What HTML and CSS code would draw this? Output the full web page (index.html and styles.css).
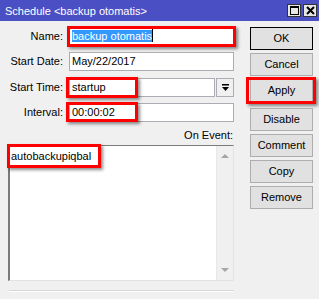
FILE: index.html
```
<!DOCTYPE html>
<html>
	<head>
		<link rel="stylesheet" href="styles.css">
	</head>
	<body>
		<div class="titlebar">
			<div class="title">Schedule &lt;backup otomatis&gt;</div>
			<div class="tb-btn">
				<svg width="9" height="9" viewBox="0 0 9 9"><rect x="0.5" y="0.5" width="8" height="8" fill="none" stroke="#000"/><rect x="0" y="0" width="9" height="2" fill="#000"/></svg>
			</div>
			<div class="tb-btn">
				<svg width="9" height="9" viewBox="0 0 9 9"><path d="M1 1 L8 8 M8 1 L1 8" stroke="#000" stroke-width="2"/></svg>
			</div>
		</div>

		<div class="content">
			<div class="form">
				<div class="row">
					<div class="label">Name:</div>
					<div class="field"><span class="selected">backup otomatis</span><span class="caret"></span><div class="mark mark-name"></div></div>
				</div>
				<div class="row">
					<div class="label">Start Date:</div>
					<div class="field">May/22/2017</div>
				</div>
				<div class="row row-time">
					<div class="label">Start Time:</div>
					<div class="field field-short">startup<div class="mark mark-short"></div></div>
					<div class="drop">
						<svg width="9" height="9" viewBox="0 0 9 9"><rect x="1" y="1" width="7" height="1.5" fill="#000"/><path d="M1 4 L8 4 L4.5 8 Z" fill="#000"/></svg>
					</div>
				</div>
				<div class="row">
					<div class="label">Interval:</div>
					<div class="field">00:00:02<div class="mark mark-short mark-interval"></div></div>
				</div>

				<div class="event-label">On Event:</div>
				<div class="event-box">
					<div class="event-text">autobackupiqbal</div>
					<div class="scrollbar">
						<span class="arrow-up"></span>
						<span class="arrow-down"></span>
					</div>
					<div class="mark mark-event"></div>
				</div>
				<div class="divider"></div>
			</div>

			<div class="buttons">
				<div class="btn btn-default">OK</div>
				<div class="btn">Cancel</div>
				<div class="btn">Apply<div class="mark mark-apply"></div></div>
				<div class="btn btn-gap">Disable</div>
				<div class="btn">Comment</div>
				<div class="btn">Copy</div>
				<div class="btn">Remove</div>
			</div>
		</div>
	</body>
</html>
```

FILE: styles.css
```
body {
	margin: 0;
	background-color: #f0f0f0;
	font-family: "Liberation Sans", Arial, sans-serif;
	font-size: 11px;
	color: #000;
}

.titlebar {
	height: 21px;
	background-color: #4b4fc4;
	color: #fff;
	display: flex;
	align-items: center;
	padding: 0 2px 0 5px;
}

.title {
	flex: 1;
	font-size: 11px;
}

.tb-btn {
	width: 14px;
	height: 13px;
	box-sizing: border-box;
	border: 1px solid #333;
	background-color: #e6e6e6;
	margin-left: 2px;
	display: flex;
	align-items: center;
	justify-content: center;
}

.content {
	display: flex;
	padding-top: 6px;
}

.form {
	width: 234px;
}

.row {
	display: flex;
	height: 19px;
	margin-bottom: 6px;
}

.row-time {
	margin-top: 7px;
}

.label {
	width: 63px;
	padding-right: 6px;
	text-align: right;
	line-height: 19px;
}

.field {
	position: relative;
	width: 165px;
	height: 19px;
	box-sizing: border-box;
	background-color: #fff;
	border: 1px solid #abadb3;
	padding-left: 2px;
	line-height: 17px;
}

.field-short {
	width: 146px;
}

.drop {
	width: 18px;
	height: 19px;
	margin-left: 1px;
	box-sizing: border-box;
	border: 1px solid #abadb3;
	background-color: #f0f0f0;
	display: flex;
	align-items: center;
	justify-content: center;
}

.selected {
	background-color: #3399ff;
	color: #fff;
}

.caret {
	display: inline-block;
	width: 1px;
	height: 13px;
	background-color: #000;
	vertical-align: -2px;
}

.event-label {
	text-align: right;
	line-height: 14px;
	margin-top: 2px;
	padding-right: 1px;
}

.event-box {
	position: relative;
	margin: 3px 0 0 8px;
	width: 226px;
	height: 136px;
	box-sizing: border-box;
	background-color: #fff;
	border: 1px solid #e3e3e3;
	border-top-color: #7a7a7a;
	border-left: 2px solid #7a7a7a;
	display: flex;
}

.event-text {
	flex: 1;
	padding: 3px 0 0 1px;
	line-height: 14px;
}

.scrollbar {
	width: 16px;
	background-color: #f0f0f0;
	border-left: 1px solid #e8e8e8;
	display: flex;
	flex-direction: column;
	justify-content: space-between;
	align-items: center;
	padding: 8px 0;
}

.arrow-up {
	width: 0;
	height: 0;
	border-left: 4px solid transparent;
	border-right: 4px solid transparent;
	border-bottom: 4px solid #a6a6a6;
}

.arrow-down {
	width: 0;
	height: 0;
	border-left: 4px solid transparent;
	border-right: 4px solid transparent;
	border-top: 4px solid #a6a6a6;
}

.divider {
	margin: 9px 0 0 9px;
	width: 225px;
	border-top: 1px solid #d6d6d6;
	border-bottom: 1px solid #fff;
}

.buttons {
	margin-left: 16px;
	width: 63px;
}

.btn {
	position: relative;
	height: 23px;
	margin-bottom: 3px;
	box-sizing: border-box;
	border: 1px solid #adadad;
	background-color: #e1e1e1;
	text-align: center;
	line-height: 21px;
}

.btn-default {
	border-color: #000;
}

.btn-gap {
	margin-top: 6px;
}

/* red annotation boxes drawn over the fields */
.mark {
	position: absolute;
	box-sizing: border-box;
	border: 3px solid #f00;
	box-shadow: 2px 2px 3px rgba(0, 0, 0, 0.45);
}

.mark-name {
	left: -3px;
	top: -2px;
	width: 169px;
	height: 21px;
}

.mark-short {
	left: -4px;
	top: -2px;
	width: 72px;
	height: 21px;
}

.mark-interval {
	height: 20px;
}

.mark-apply {
	left: -5px;
	top: -3px;
	width: 70px;
	height: 27px;
}

.mark-event {
	left: -3px;
	top: -2px;
	width: 94px;
	height: 24px;
}
```
